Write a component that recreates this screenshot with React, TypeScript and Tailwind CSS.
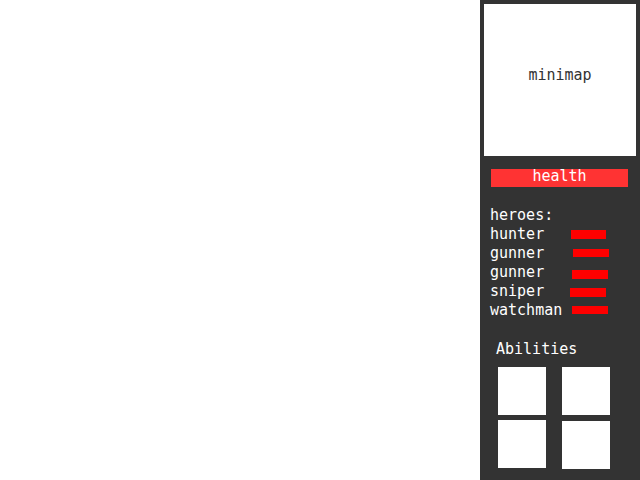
const heroes = [
  { name: 'hunter', offset: 'ml-[81px]', bar: 'w-[35px] h-[9px] mt-[5px]' },
  { name: 'gunner', offset: 'ml-[83px]', bar: 'w-[36px] h-[8px] mt-[5px]' },
  { name: 'gunner', offset: 'ml-[82px]', bar: 'w-[36px] h-[9px] mt-[7px]' },
  { name: 'sniper', offset: 'ml-[80px]', bar: 'w-[36px] h-[9px] mt-[6px]' },
  { name: 'watchman', offset: 'ml-[82px]', bar: 'w-[36px] h-[8px] mt-[5px]' },
]

export default function App() {
  return (
    <div className="flex w-[640px] h-[480px] bg-white font-['DejaVu_Sans_Mono',monospace] text-[15px]">
      <div className="flex-1" />
      <div className="w-[160px] h-full bg-[#333333] flex flex-col">
        <div className="m-1 h-[152px] bg-white flex items-center justify-center text-[#333333] leading-[19px] pb-[10px]">
          minimap
        </div>
        <div className="mt-[9px] ml-[11px] w-[137px] h-[18px] bg-[#ff3333] text-white text-center leading-[15px]">
          health
        </div>
        <div className="mt-[19px] pl-[10px] text-white leading-[19px]">
          <div>heroes:</div>
          {heroes.map((h, i) => (
            <div key={i} className="relative flex items-start h-[19px]">
              <span className="absolute left-0 top-0">{h.name}</span>
              <div className={`${h.offset} ${h.bar} bg-[#ff0000]`} />
            </div>
          ))}
        </div>
        <div className="mt-[20px] pl-[16px] text-white leading-[19px]">Abilities</div>
        <div className="mt-[8px] pl-[18px] grid grid-cols-[48px_48px] gap-x-[16px] gap-y-[5px]">
          <div className="w-[48px] h-[48px] bg-white" />
          <div className="w-[48px] h-[48px] bg-white" />
          <div className="w-[48px] h-[48px] bg-white" />
          <div className="w-[48px] h-[48px] bg-white mt-[1px]" />
        </div>
      </div>
    </div>
  )
}
